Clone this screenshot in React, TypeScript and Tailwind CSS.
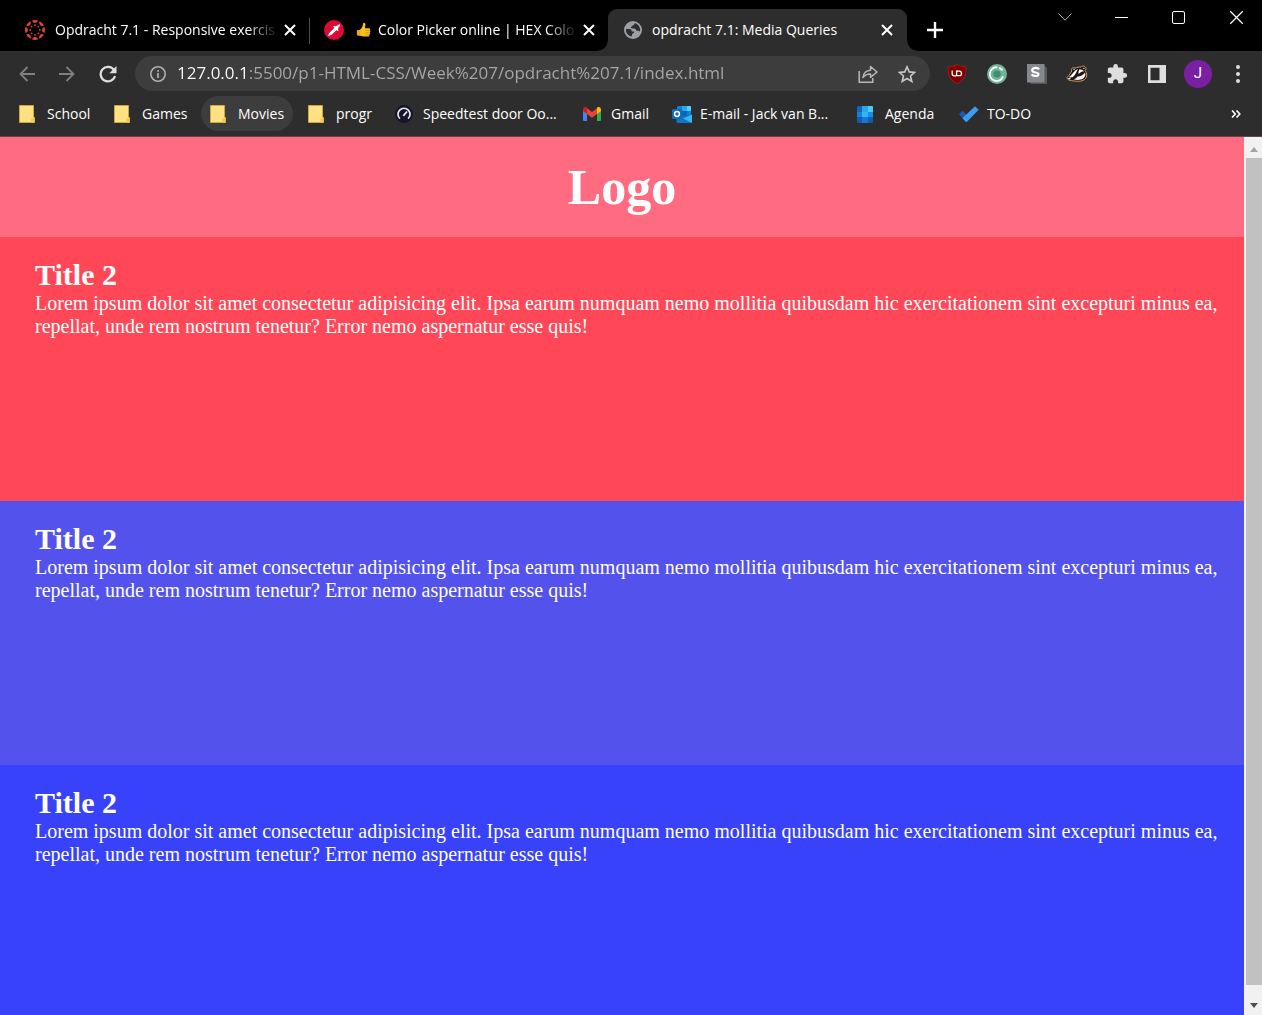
import React from "react";

type IconProps = { className?: string };

function CanvasIcon() {
  const spokes = [0, 45, 90, 135, 180, 225, 270, 315];
  return (
    <svg viewBox="0 0 20 20" className="size-5 shrink-0" fill="#e04437" aria-hidden="true">
      {spokes.map((angle) => (
        <g key={angle} transform={`rotate(${angle} 10 10)`}>
          <path d="M7 .5a10 10 0 0 1 6 0a3.1 3.300 0 0 1-6 0z" />
          <circle cx="10" cy="5.200" r="0.9" />
        </g>
      ))}
    </svg>
  );
}

function PickerIcon() {
  return (
    <svg viewBox="0 0 20 20" className="size-5 shrink-0" aria-hidden="true">
      <circle cx="10" cy="10" r="10" fill="#dc0a37" />
      <path d="M4 16l1.200-2.900 5.200-5.300-1.300-1 1-1 1.500.6 3.200-2c1-.4 1.500.2 1.200 1.100l-2.100 3.200.7 1.500-1 1-1-1.300-5.300 5.100z" fill="#fff" />
    </svg>
  );
}

function ThumbIcon() {
  return (
    <svg viewBox="0 0 16 16" className="size-4 shrink-0" role="img" aria-label="Thumbs up">
      <path d="M7.200 1c1.200-.6 2.300.3 2.200 1.800L9 6.300h4c1.400 0 1.600 1.700.7 2.200 1 .5.8 1.900 0 2.200.6.700.3 1.700-.5 2 .4 1-.2 1.800-1.200 1.800H7.600C5.400 14.500 4 13.500 3.600 13L3.300 8.300C5.500 6.800 6.900 5 7.200 1z" fill="#fcc21b" />
      <path d="M1.500 8h2.800v5.700H2c-.8 0-1.200-1-1.200-2.800S.9 8 1.500 8z" fill="#f0a51e" />
      <path d="M9.600 8.500h4M9.400 10.700h4.200M9.300 12.700h3.800" stroke="#d68a16" strokeWidth=".8" />
    </svg>
  );
}

function GlobeIcon() {
  return (
    <svg viewBox="0 0 18 18" className="size-[18px] shrink-0" aria-hidden="true">
      <circle cx="9" cy="9" r="9" fill="#9aa0a6" />
      <path d="M10.500 2c.4 1.300-.3 2.200-1.800 2.300-.3 1.200-1.200 1.300-2 1.900.2 1.300 1.600 1.200 3.200 1.300 1.800.1 2.500 1 2.400 2.300h1.900c.9.100 1.200.6 1.300 1l.6-1A7.200 7.200 0 0 0 10.500 2zM2 8h3.300c1.800.2 2.500 1.200 2.600 2.600h2.200c.3 1.200-.3 2-1.600 2-.6.700-.3 1.700-1 2.800A7.300 7.300 0 0 1 2 8z" fill="#2d2d2d" />
    </svg>
  );
}

function Cross({ className }: IconProps) {
  return (
    <svg viewBox="0 0 12 12" className={className} fill="none" stroke="currentColor" aria-hidden="true">
      <path d="M1 1l10 10M11 1L1 11" />
    </svg>
  );
}

function Folder() {
  return (
    <svg viewBox="0 0 18 18" className="size-[18px] shrink-0" aria-hidden="true">
      <path d="M.500.500h14v12h1v5h-15z" fill="#ffe183" stroke="#d8b13b" strokeWidth=".8" />
      <path d="M12 17.500v-3.500l2.500-1.500h1v5z" fill="#f3cb55" />
    </svg>
  );
}

function Speedtest() {
  return (
    <svg viewBox="0 0 18 18" className="size-[18px] shrink-0" aria-hidden="true">
      <circle cx="9" cy="9" r="9" fill="#15152b" />
      <path d="M5 13.700a6 6 0 1 1 8 0" fill="none" stroke="#e5e6ee" strokeWidth="1.700" />
      <path d="M8.300 10.800L12 6.500" stroke="#e5e6ee" strokeWidth="1.800" />
    </svg>
  );
}

function Gmail() {
  return (
    <svg viewBox="0 0 18 14" className="h-3.5 w-[18px] shrink-0" aria-hidden="true">
      <path d="M0 3v9.700C0 13.400.6 14 1.300 14H4V6z" fill="#4285f4" />
      <path d="M18 3v9.700c0 .7-.6 1.300-1.300 1.300H14V6z" fill="#34a853" />
      <path d="M14 1.200V7l4-3V2.400C18 .4 15.800-.7 14.200.5z" fill="#fbbc04" />
      <path d="M4 7V1.200l5 3.700 5-3.700V7l-5 3.700z" fill="#ea4335" />
      <path d="M0 2.400V4l4 3V1.200L3.700.500C2.200-.7 0 .4 0 2.400z" fill="#c5221f" />
    </svg>
  );
}

function Outlook() {
  return (
    <svg viewBox="0 0 20 18" className="h-[18px] w-5 shrink-0" aria-hidden="true">
      <path d="M5 2a1 1 0 0 1 1-1h12a1 1 0 0 1 1 1v9H5z" fill="#1480d2" />
      <path d="M10 1h5v5h-5z" fill="#28a8ea" />
      <path d="M15 1h3a1 1 0 0 1 1 1v4h-4z" fill="#50d0ff" />
      <path d="M10 6h5v5h-5z" fill="#0364b8" />
      <path d="M4.500 11H12l8-1.500V17a1 1 0 0 1-1 1H5.500a1 1 0 0 1-1-1z" fill="#1275c8" />
      <path d="M20 9.500V17a1 1 0 0 1-.5.800L11 13.500z" fill="#35b8f1" />
      <rect y="4" width="10" height="10" rx="1" fill="#0f6cbd" />
      <circle cx="5" cy="9" r="2.400" fill="none" stroke="#fff" strokeWidth="1.500" />
    </svg>
  );
}

function Agenda() {
  return (
    <svg viewBox="0 0 16 18" className="h-[18px] w-4 shrink-0" aria-hidden="true">
      <rect y="1" width="16" height="17" rx="1.500" fill="#0f5cb5" />
      <path d="M0 2h5v5H0z" fill="#1066bd" />
      <path d="M5 1h6v6H5z" fill="#28a8ea" />
      <path d="M11 1h4a1 1 0 0 1 1 1v5h-5z" fill="#50c8f5" />
      <path d="M0 7h5v5H0z" fill="#1580d6" />
      <path d="M5 7h6v5H5z" fill="#32b5f2" />
      <path d="M11 7h5v5h-5z" fill="#1490df" />
      <path d="M5 12h6v6H5z" fill="#1478d4" />
    </svg>
  );
}

function Todo() {
  return (
    <svg viewBox="0 0 20 16" className="h-4 w-5 shrink-0" aria-hidden="true">
      <path d="M3.500 4.800L0 8.300l6.700 7 4-3.500z" fill="#195abd" />
      <path d="M6.700 15.800l-3.300-3.500L16 .300l3.700 3.500L8 15.800c-.4.400-.9.400-1.300 0z" fill="#3a9bef" />
    </svg>
  );
}

function Shield() {
  return (
    <svg viewBox="0 0 20 20" className="size-5" aria-hidden="true">
      <path d="M10 .500c2.500 1.600 5.500 2.200 9 2.200.3 8-1.500 13.300-9 17C2.500 16 .7 10.700 1 2.700c3.500 0 6.500-.6 9-2.200z" fill="#800000" stroke="#a52a2a" strokeWidth=".7" />
      <path d="M5.200 6.500v3.300a2 2 0 0 0 2 2h1.600q.8 0 .8-.8V6.500" stroke="#fff" strokeWidth="1.300" fill="none" />
      <path d="M9.600 7.200h2.700a2.200 2.200 0 0 1 0 4.500H9.600" stroke="#fff" strokeWidth="1.300" fill="none" />
    </svg>
  );
}

function GreenRing() {
  return (
    <svg viewBox="0 0 20 20" className="size-5" aria-hidden="true">
      <circle cx="10" cy="10" r="10" fill="#6fb39b" />
      <circle cx="10" cy="10" r="3.600" fill="#3f8f72" />
      <path d="M9.500 3.300A6.800 6.800 0 1 0 15.800 13" fill="none" stroke="#fff" strokeWidth="1.900" strokeLinecap="round" />
      <path d="M12.800 4.200l2.200 1.500" stroke="#fff" strokeWidth="2" strokeLinecap="round" />
    </svg>
  );
}

function Stylus() {
  return (
    <svg viewBox="0 0 20 20" className="size-5" aria-hidden="true">
      <path d="M3 18.500L17 1l3 3v16H4.500z" fill="#55585c" />
      <path d="M0 0h17.500v18.500H0z" fill="#85888c" />
      <path d="M12 5.300C11.300 4.200 10 3.900 8.600 3.900c-2 0-3.400.8-3.400 2.300 0 3.200 6.200 1.400 6.200 4 0 1.300-1.400 1.800-3 1.800-1.600 0-3-.5-3.800-1.600" stroke="#fff" strokeWidth="2.200" fill="none" />
    </svg>
  );
}

function Badger() {
  return (
    <svg viewBox="0 0 22 18" className="h-[18px] w-[22px]" aria-hidden="true">
      <path d="M1.200 12.500C3.500 9.500 4.800 8 5.800 6 4.600 3.800 6.800 1.600 9 3.200c2-1 4-1.300 6-1C15.600.6 19.500.7 20 3.200c.2 1-.3 1.700-1 2.200 2 2.300 2.300 5 .8 7.700C18 16 14 16.500 10.500 16.200 6 15.800.500 15.500 1.200 12.500z" fill="#1c1614" stroke="#d99a5b" strokeWidth="1" />
      <path d="M3.500 12C6 10 8 5.500 12 4c-1.500 2.500-2.500 6-5.500 8.300z" fill="#fff" />
      <path d="M13.500 4.200c2 0 3.500.8 4.500 2-2 .2-4 1.200-5.500 2.800-.2-1.700.2-3.300 1-4.800z" fill="#fff" />
      <path d="M19 7.500c.8 2 .2 4-1.200 5.500-2.500 2.200-6.800 2.200-10.300 1.500 1.700-.8 3-1.700 4-3 2.500.2 5.500-1 7.500-4z" fill="#f7f0ea" />
      <circle cx="3.300" cy="13" r="1.400" fill="#f7f0ea" />
      <circle cx="2.800" cy="12.300" r=".9" fill="#111" />
      <path d="M7.500 3.800l1 1M17.500 3l.8.800" stroke="#f7f0ea" strokeWidth="1.200" />
    </svg>
  );
}

function Puzzle() {
  return (
    <svg viewBox="0 0 24 24" className="size-[22px]" fill="#dedede" aria-hidden="true">
      <path d="M20.500 11H19V7c0-1.100-.9-2-2-2h-4V3.500a2.500 2.500 0 0 0-5 0V5H4c-1.100 0-1.990.9-1.990 2v3.800H3.500c1.490 0 2.700 1.210 2.700 2.700s-1.210 2.700-2.700 2.700H2V20c0 1.100.9 2 2 2h3.800v-1.500c0-1.490 1.210-2.700 2.700-2.700s2.700 1.210 2.700 2.700V22H17c1.100 0 2-.9 2-2v-4h1.500a2.500 2.500 0 0 0 0-5z" />
    </svg>
  );
}

function SidePanel() {
  return (
    <svg viewBox="0 0 18 18" className="size-[18px]" aria-hidden="true">
      <path d="M0 0h18v18H0zM2.500 2.800v12.400h9V2.800z" fill="#dedede" fillRule="evenodd" />
    </svg>
  );
}

function TabSeparator() {
  return <span className="mb-[7px] h-[26px] w-px shrink-0 bg-[#4d4d4d]" />;
}

const fade = "[mask-image:linear-gradient(to_right,black_86%,transparent)]";

function Tab({ icon, children, active }: { icon: React.ReactNode; children: React.ReactNode; active?: boolean }) {
  return (
    <div
      className={
        active
          ? "relative flex h-[42px] w-[299px] items-center rounded-t-[9px] bg-[#2d2d2d] pl-4 pr-3 before:absolute before:bottom-0 before:-left-2.5 before:size-2.5 before:bg-[radial-gradient(circle_at_0_0,transparent_9px,#2d2d2d_10px)] after:absolute after:bottom-0 after:-right-2.5 after:size-2.5 after:bg-[radial-gradient(circle_at_100%_0,transparent_9px,#2d2d2d_10px)]"
          : "flex h-[42px] w-[298px] items-center pl-3.5 pr-[11px]"
      }
    >
      <button role="tab" aria-selected={!!active} className="flex min-w-0 flex-1 items-center gap-2.5 text-left">
        {icon}
        <span className={`min-w-0 flex-1 whitespace-nowrap ${active ? "" : fade}`}>{children}</span>
      </button>
      <button aria-label="Close tab" className="ml-1 grid size-4 shrink-0 place-items-center">
        <Cross className="size-3 stroke-2" />
      </button>
    </div>
  );
}

const bookmarks = [
  { label: "School", icon: <Folder />, width: "w-[89px]" },
  { label: "Games", icon: <Folder />, width: "w-[90px]" },
  { label: "Movies", icon: <Folder />, width: "w-[92px]", hover: true },
  { label: "progr", icon: <Folder />, width: "w-[81px]" },
  { label: "Speedtest door Oo...", icon: <Speedtest />, width: "w-[182px]" },
  { label: "Gmail", icon: <Gmail />, width: "w-[83px]" },
  { label: "E-mail - Jack van B...", icon: <Outlook />, width: "w-[179px]" },
  { label: "Agenda", icon: <Agenda />, width: "w-[96px]" },
  { label: "TO-DO", icon: <Todo />, width: "w-[92px]" },
];

const extensions = [
  { label: "uBlock Origin", icon: <Shield /> },
  { label: "Color tool", icon: <GreenRing /> },
  { label: "Stylus", icon: <Stylus /> },
  { label: "Privacy Badger", icon: <Badger /> },
  { label: "Extensions", icon: <Puzzle /> },
  { label: "Side panel", icon: <SidePanel /> },
];

const sections = ["bg-[#ff4757]", "bg-[#5352ed]", "bg-[#3742fa]"];

export default function App() {
  return (
    <div className="flex h-screen flex-col overflow-hidden font-['Open_Sans',sans-serif] text-sm text-white">
      <div className="flex h-[51px] shrink-0 items-end bg-black pl-[11px]">
        <div role="tablist" className="flex items-end">
          <Tab icon={<CanvasIcon />}>Opdracht 7.1 - Responsive exercis</Tab>
          <TabSeparator />
          <Tab icon={<PickerIcon />}>
            <span className="flex items-center gap-1.5 pl-0.5">
              <ThumbIcon />
              Color Picker online | HEX Colo
            </span>
          </Tab>
          <Tab icon={<GlobeIcon />} active>
            opdracht 7.1: Media Queries
          </Tab>
        </div>
        <button aria-label="New tab" className="ml-5 flex h-[42px] items-center">
          <svg viewBox="0 0 16 16" className="size-4" stroke="#fff" strokeWidth="2.400" aria-hidden="true">
            <path d="M8 0v16M0 8h16" />
          </svg>
        </button>
        <div className="ml-auto flex self-start">
          <button aria-label="Search tabs" className="grid h-[34px] w-[57px] place-items-center">
            <svg viewBox="0 0 14 8" className="h-2 w-3.5" fill="none" stroke="#b8b8b8" aria-hidden="true">
              <path d="M.5.500L7 7.200 13.500.500" />
            </svg>
          </button>
          <button aria-label="Minimize" className="grid h-[34px] w-[57px] place-items-center">
            <span className="h-px w-[13px] bg-white" />
          </button>
          <button aria-label="Maximize" className="grid h-[34px] w-[57px] place-items-center">
            <span className="size-[13px] rounded-[2px] border border-white" />
          </button>
          <button aria-label="Close window" className="grid h-[34px] w-[55px] place-items-center pl-[3px]">
            <Cross className="size-[15px]" />
          </button>
        </div>
      </div>

      <div className="flex h-[45px] shrink-0 items-center bg-[#2d2d2d] pl-[19px] pr-[18px]">
        <div className="flex w-[116px] shrink-0 items-center gap-6">
          <button aria-label="Back">
            <svg viewBox="0 0 16 16" className="size-4" fill="none" stroke="#808080" strokeWidth="1.800" aria-hidden="true">
              <path d="M16 8H1.500M8.500 1l-7 7 7 7" />
            </svg>
          </button>
          <button aria-label="Forward">
            <svg viewBox="0 0 16 16" className="size-4" fill="none" stroke="#808080" strokeWidth="1.800" aria-hidden="true">
              <path d="M0 8h14.500M7.500 1l7 7-7 7" />
            </svg>
          </button>
          <button aria-label="Reload">
            <svg viewBox="0 0 18 18" className="size-[18px]" aria-hidden="true">
              <path d="M15 5A7.300 7.300 0 1 0 16 11" fill="none" stroke="#dedede" strokeWidth="2.200" />
              <path d="M17.500 1v7.200h-7.200z" fill="#dedede" />
            </svg>
          </button>
        </div>
        <div className="flex h-[35px] min-w-0 flex-1 items-center rounded-full bg-[#3d3d3d] pl-3.5 pr-3.5">
          <button aria-label="Site information" className="shrink-0">
            <svg viewBox="0 0 18 18" className="size-[18px]" fill="none" stroke="#b0b0b0" aria-hidden="true">
              <circle cx="9" cy="9" r="7.200" strokeWidth="1.600" />
              <path d="M9 8v5M9 5v1.700" strokeWidth="1.700" />
            </svg>
          </button>
          <input
            aria-label="Address"
            defaultValue="127.0.0.1:5500/p1-HTML-CSS/Week%207/opdracht%207.1/index.html"
            className="ml-2.5 min-w-0 flex-1 bg-[linear-gradient(to_right,#ffffff_71px,#a8a8a8_71px)] bg-clip-text text-[17px] text-transparent outline-none"
          />
          <button aria-label="Share" className="shrink-0">
            <svg viewBox="0 0 20 18" className="h-[18px] w-5" fill="none" stroke="#b8b8b8" strokeWidth="1.500" aria-hidden="true">
              <path d="M1.200 6v11.200h13.600V13" />
              <path d="M5 12.500C5.500 8 8 5.500 12.500 5.200V1.500L19 7l-6.500 5.300V9C9.500 8.900 7 10 5 12.500z" strokeLinejoin="round" />
            </svg>
          </button>
          <button aria-label="Bookmark this tab" className="ml-5 shrink-0">
            <svg viewBox="0 0 18 18" className="size-[18px]" fill="none" stroke="#c8c8c8" strokeWidth="1.600" aria-hidden="true">
              <path d="M9 1.800l2.200 5.100 5.500.500-4.200 3.600 1.300 5.400L9 13.500l-4.800 2.900 1.300-5.400L1.300 7.400l5.500-.5z" />
            </svg>
          </button>
        </div>
        <div className="ml-[7px] flex shrink-0">
          {extensions.map((item) => (
            <button key={item.label} aria-label={item.label} className="grid h-8 w-10 place-items-center">
              {item.icon}
            </button>
          ))}
        </div>
        <button aria-label="Profile" className="ml-[7px] grid size-7 shrink-0 place-items-center rounded-full bg-[#7b1fa2] font-[Roboto,sans-serif] text-[15px]">
          J
        </button>
        <button aria-label="Menu" className="ml-5 flex w-3 shrink-0 flex-col items-center gap-[3px]">
          <span className="size-[4px] rounded-full bg-[#dedede]" />
          <span className="size-[4px] rounded-full bg-[#dedede]" />
          <span className="size-[4px] rounded-full bg-[#dedede]" />
        </button>
      </div>

      <nav aria-label="Bookmarks" className="flex h-[41px] shrink-0 items-start gap-1.5 border-b border-[#5a4a4d] bg-[#2d2d2d] pl-2.5">
        {bookmarks.map((item) => (
          <a
            key={item.label}
            href="#"
            className={`flex h-[35px] shrink-0 items-center whitespace-nowrap rounded-full pl-[9px] ${item.width} ${item.hover ? "bg-[#3d3d3d]" : ""}`}
          >
            <span className="flex w-7 shrink-0 items-center">{item.icon}</span>
            {item.label}
          </a>
        ))}
        <button aria-label="More bookmarks" className="ml-auto mr-[21px] h-[35px]">
          <svg viewBox="0 0 10 8" className="h-2 w-2.5" fill="none" stroke="#fff" strokeWidth="1.600" aria-hidden="true">
            <path d="M1 .5L4.300 4 1 7.500M5.500.500L8.800 4 5.500 7.500" />
          </svg>
        </button>
      </nav>

      <div className="flex min-h-0 flex-1 font-['Liberation_Serif',serif] text-xl leading-[23px]">
        <div className="min-w-0 flex-1 overflow-hidden">
          <header className="flex h-[100px] items-center justify-center bg-[#ff6b81]">
            <h1 className="text-[50px] leading-[58px] font-bold">Logo</h1>
          </header>
          <main>
            {sections.map((color) => (
              <section key={color} className={`min-h-[264px] pt-5 pr-5 pl-[35px] ${color}`}>
                <h2 className="text-3xl leading-[35px] font-bold">Title 2</h2>
                <p>
                  Lorem ipsum dolor sit amet consectetur adipisicing elit. Ipsa earum numquam nemo mollitia quibusdam hic exercitationem sint excepturi minus ea, repellat, unde rem nostrum tenetur? Error nemo aspernatur esse quis!
                </p>
              </section>
            ))}
          </main>
        </div>
        <div aria-hidden="true" className="flex w-[18px] shrink-0 flex-col items-center bg-[#f1f1f1] pl-0.5">
          <span className="grid h-[21px] shrink-0 place-items-center pt-1">
            <svg viewBox="0 0 8 5" className="h-[5px] w-2">
              <path d="M0 5l4-5 4 5z" fill="#a3a3a3" />
            </svg>
          </span>
          <span className="w-full flex-1 bg-[#c1c1c1]" />
          <span className="grid h-[30px] shrink-0 place-items-center pt-2.5">
            <svg viewBox="0 0 8 5" className="h-[5px] w-2">
              <path d="M0 0l4 5 4-5z" fill="#505050" />
            </svg>
          </span>
        </div>
      </div>
    </div>
  );
}
